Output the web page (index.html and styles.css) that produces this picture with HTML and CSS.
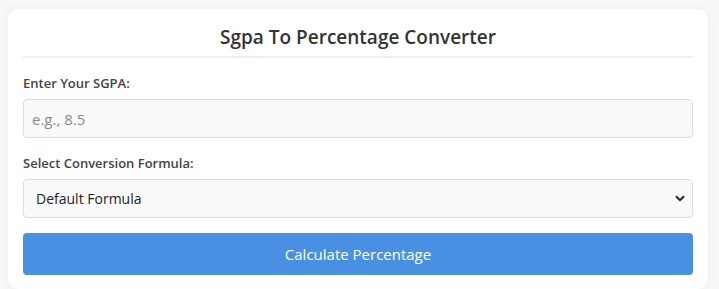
FILE: index.html
```html
<!DOCTYPE html>
<html>
<head>
<meta charset="utf-8">
<link rel="stylesheet" href="styles.css">
</head>
<body>
<div class="card">
  <h2 class="title">Sgpa To Percentage Converter</h2>
  <div class="field">
    <label class="label">Enter Your SGPA:</label>
    <input class="input" type="text" placeholder="e.g., 8.5">
  </div>
  <div class="field">
    <label class="label">Select Conversion Formula:</label>
    <div class="select">
      <span>Default Formula</span>
      <svg class="chev" width="10" height="7" viewBox="0 0 10 7"><path d="M1 1.2 L5 5.2 L9 1.2" fill="none" stroke="#222" stroke-width="2"/></svg>
    </div>
  </div>
  <button class="btn">Calculate Percentage</button>
</div>
</body>
</html>
```
FILE: styles.css
```css
html, body { margin: 0; padding: 0; }
body {
  background: #f8f8f8;
  font-family: "Open Sans", "Noto Sans", sans-serif;
  color: #333;
  padding: 9px 11px 0 8px;
}
.card {
  width: 700px;
  box-sizing: border-box;
  background: #fff;
  border-radius: 10px;
  box-shadow: 0 0 10px rgba(0,0,0,0.06);
  padding: 15px 15px 14px;
}
.title {
  margin: 0;
  font-size: 19px;
  font-weight: 600;
  text-align: center;
  color: #333;
  line-height: 26px;
  padding-bottom: 6px;
  border-bottom: 2px solid #eee;
}
.field {
  margin-top: 15px;
}
.label {
  display: block;
  font-size: 13px;
  font-weight: 600;
  color: #444;
  line-height: 20px;
  margin-bottom: 6px;
}
.input {
  display: block;
  width: 100%;
  box-sizing: border-box;
  height: 39px;
  border: 1px solid #ddd;
  border-radius: 4px;
  background: #f9f9f9;
  padding: 0 8px;
  font-family: inherit;
  font-size: 15px;
  color: #333;
  outline: none;
}
.input::placeholder { color: #8a8a8a; }
.select {
  height: 39px;
  box-sizing: border-box;
  border: 1px solid #ddd;
  border-radius: 4px;
  background: #f9f9f9;
  padding: 0 7px 0 12px;
  display: flex;
  align-items: center;
  justify-content: space-between;
  font-size: 14px;
  color: #222;
}
.btn {
  display: block;
  width: 100%;
  margin-top: 15px;
  height: 42px;
  border: none;
  border-radius: 4px;
  background: #4a90e2;
  color: #fff;
  font-family: inherit;
  font-size: 15px;
}
```
